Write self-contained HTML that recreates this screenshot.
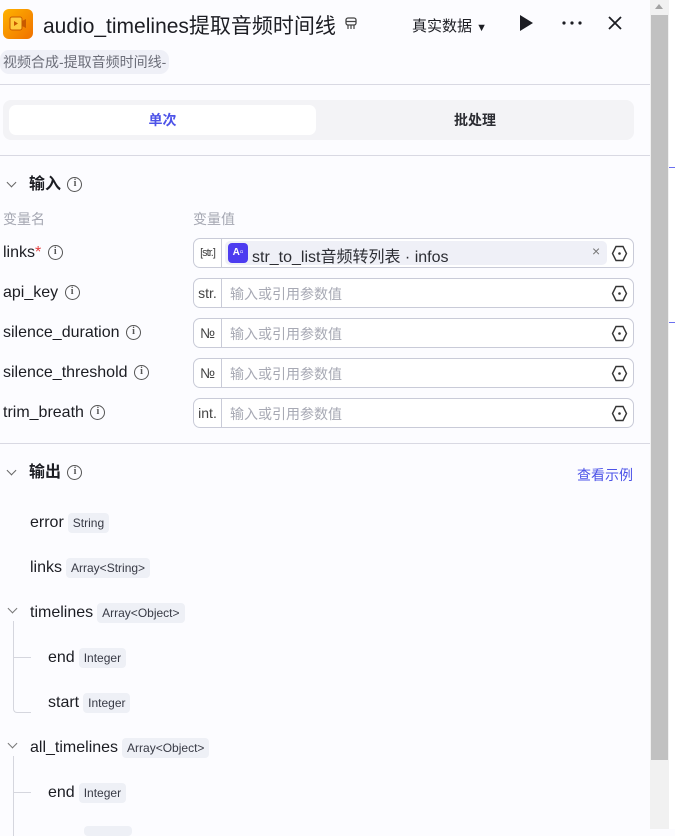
<!DOCTYPE html>
<html><head><meta charset="utf-8"><style>
*{box-sizing:border-box;margin:0;padding:0}
body{width:675px;height:829px;overflow:hidden;background:#fcfcff;font-family:"Liberation Sans","Noto Sans CJK SC",sans-serif;color:#1c1d23;position:relative}
.a{position:absolute;white-space:nowrap}
.hr{position:absolute;left:0;width:650px;height:1px;background:#d9d9e3}
.info{display:inline-block;width:15px;height:15px;border:1.3px solid #555;border-radius:50%;font-size:10px;line-height:12px;text-align:center;color:#555;vertical-align:middle;font-family:"Liberation Serif",serif;font-weight:bold;margin-left:2px}
.lbl{font-size:16px;left:3px;line-height:18px}
.box{position:absolute;left:193px;width:441px;height:30px;border:1px solid #c9cbd8;border-radius:7px;background:#fff}
.pre{position:absolute;left:0;top:0;width:28px;height:28px;border-right:1px solid #c9cbd8;font-size:14px;color:#444;text-align:center;line-height:28px}
.ph{position:absolute;left:36px;top:5px;font-size:14px;color:#a7a9b4}
.hex{position:absolute;right:5px;top:6px}
.tag{display:inline-block;background:#eef0f6;color:#383a45;font-size:12px;padding:1px 5px;border-radius:4px;margin-left:4px;vertical-align:middle;line-height:18px}
.out{font-size:16px;line-height:18px}
.chev{position:absolute;width:7px;height:7px;border-right:1.5px solid #666;border-bottom:1.5px solid #666;transform:rotate(45deg)}
</style></head><body>
<!-- header -->
<div class="a" style="left:3px;top:9px;width:30px;height:30px;border-radius:6px;background:linear-gradient(135deg,#ffb300,#f07000)"></div>
<svg class="a" style="left:9px;top:16px" width="18" height="16"><rect x="1" y="1" width="12" height="13" rx="2" fill="#ffcb3d" stroke="#c85a00"/><path d="M13 5 L17 3 L17 12 L13 10Z" fill="#c85a00"/><path d="M5 5 L9 7.5 L5 10Z" fill="#c85a00"/></svg>
<div class="a" style="left:43px;top:10px;font-size:21px;color:#1c1d23">audio_timelines提取音频时间线</div>
<svg class="a" style="left:345px;top:17px" width="12" height="13"><rect x="1" y="1" width="10" height="7" rx="2" fill="none" stroke="#444" stroke-width="1.3"/><path d="M3 8 V12 M6 8 V12 M9 8 V12 M1 4.5 H11" stroke="#444" stroke-width="1.2"/></svg>
<div class="a" style="left:412px;top:15px;font-size:15px;color:#1c1d23">真实数据 <span style="font-size:11px">▼</span></div>
<svg class="a" style="left:518px;top:14px" width="16" height="18"><path d="M2 1 L15 9 L2 17Z" fill="#1c1d23"/></svg>
<svg class="a" style="left:561px;top:20px" width="22" height="6"><circle cx="3" cy="3" r="1.6" fill="#1c1d23"/><circle cx="11" cy="3" r="1.6" fill="#1c1d23"/><circle cx="19" cy="3" r="1.6" fill="#1c1d23"/></svg>
<svg class="a" style="left:607px;top:15px" width="16" height="16"><path d="M2 2 L14 14 M14 2 L2 14" stroke="#1c1d23" stroke-width="1.8"/></svg>
<div class="a" style="left:0;top:50px;height:24px;padding:0 3px;background:#eff0f7;border-radius:9px;font-size:14px;line-height:24px;color:#6c6e79">视频合成-提取音频时间线-</div>
<div class="hr" style="top:84px"></div>
<!-- tabs -->
<div class="a" style="left:3px;top:100px;width:631px;height:40px;background:#f3f3f6;border-radius:8px"></div>
<div class="a" style="left:9px;top:105px;width:307px;height:30px;background:#fff;border-radius:7px;text-align:center;line-height:30px;font-size:14px;font-weight:bold;color:#4d53e8">单次</div>
<div class="a" style="left:320px;top:105px;width:310px;height:30px;text-align:center;line-height:30px;font-size:14px;font-weight:bold;color:#2c2d33">批处理</div>
<div class="hr" style="top:155px"></div>
<!-- input -->
<div class="chev" style="left:8px;top:179px"></div>
<div class="a" style="left:29px;top:175px;font-size:16px;font-weight:bold;line-height:20px">输入 <span class="info">i</span></div>
<div class="a" style="left:3px;top:209px;font-size:14px;color:#a5a7b2">变量名</div>
<div class="a" style="left:193px;top:209px;font-size:14px;color:#a5a7b2">变量值</div>

<div class="a lbl" style="top:244px">links<span style="color:#e53e3e">*</span> <span class="info">i</span></div>
<div class="box" style="top:238px"><div class="pre" style="font-size:11px;letter-spacing:-1px">[str.]</div>
<div class="a" style="left:31px;top:2px;width:382px;height:24px;background:#eff0f7;border-radius:5px"></div>
<div class="a" style="left:34px;top:4px;width:20px;height:20px;background:#4d3cf0;border-radius:4px;color:#fff;font-size:10px;font-weight:bold;text-align:center;line-height:20px">A▫</div>
<div class="a" style="left:58px;top:4px;font-size:16px;color:#2c2d33">str_to_list音频转列表 · infos</div>
<div class="a" style="left:398px;top:4px;font-size:14px;color:#777">×</div>
<svg class="hex" width="17" height="17"><path d="M5 1.5 H12 L15.5 8.5 L12 15.5 H5 L1.5 8.5Z" fill="none" stroke="#333" stroke-width="1.4"/><circle cx="8.5" cy="8.5" r="1.3" fill="#333"/></svg></div>

<div class="a lbl" style="top:284px">api_key <span class="info">i</span></div>
<div class="box" style="top:278px"><div class="pre">str.</div><div class="ph">输入或引用参数值</div><svg class="hex" width="17" height="17"><path d="M5 1.5 H12 L15.5 8.5 L12 15.5 H5 L1.5 8.5Z" fill="none" stroke="#333" stroke-width="1.4"/><circle cx="8.5" cy="8.5" r="1.3" fill="#333"/></svg></div>
<div class="a lbl" style="top:324px">silence_duration <span class="info">i</span></div>
<div class="box" style="top:318px"><div class="pre">№</div><div class="ph">输入或引用参数值</div><svg class="hex" width="17" height="17"><path d="M5 1.5 H12 L15.5 8.5 L12 15.5 H5 L1.5 8.5Z" fill="none" stroke="#333" stroke-width="1.4"/><circle cx="8.5" cy="8.5" r="1.3" fill="#333"/></svg></div>
<div class="a lbl" style="top:364px">silence_threshold <span class="info">i</span></div>
<div class="box" style="top:358px"><div class="pre">№</div><div class="ph">输入或引用参数值</div><svg class="hex" width="17" height="17"><path d="M5 1.5 H12 L15.5 8.5 L12 15.5 H5 L1.5 8.5Z" fill="none" stroke="#333" stroke-width="1.4"/><circle cx="8.5" cy="8.5" r="1.3" fill="#333"/></svg></div>
<div class="a lbl" style="top:404px">trim_breath <span class="info">i</span></div>
<div class="box" style="top:398px"><div class="pre">int.</div><div class="ph">输入或引用参数值</div><svg class="hex" width="17" height="17"><path d="M5 1.5 H12 L15.5 8.5 L12 15.5 H5 L1.5 8.5Z" fill="none" stroke="#333" stroke-width="1.4"/><circle cx="8.5" cy="8.5" r="1.3" fill="#333"/></svg></div>
<div class="hr" style="top:443px"></div>
<!-- output -->
<div class="chev" style="left:8px;top:467px"></div>
<div class="a" style="left:29px;top:463px;font-size:16px;font-weight:bold;line-height:20px">输出 <span class="info">i</span></div>
<div class="a" style="left:577px;top:465px;font-size:14px;color:#4d53e8">查看示例</div>
<div class="a out" style="left:30px;top:513px">error<span class="tag">String</span></div>
<div class="a out" style="left:30px;top:558px">links<span class="tag">Array&lt;String&gt;</span></div>
<div class="chev" style="left:9px;top:605px;border-color:#777"></div>
<div class="a out" style="left:30px;top:603px">timelines<span class="tag">Array&lt;Object&gt;</span></div>
<div class="a" style="left:13px;top:621px;width:18px;height:92px;border-left:1px solid #d5d6de;border-bottom:1px solid #d5d6de;border-bottom-left-radius:4px"></div>
<div class="a" style="left:14px;top:657px;width:17px;height:1px;background:#d5d6de"></div>
<div class="a out" style="left:48px;top:648px">end<span class="tag">Integer</span></div>
<div class="a out" style="left:48px;top:693px">start<span class="tag">Integer</span></div>
<div class="chev" style="left:9px;top:740px;border-color:#777"></div>
<div class="a out" style="left:30px;top:738px">all_timelines<span class="tag">Array&lt;Object&gt;</span></div>
<div class="a" style="left:13px;top:756px;width:1px;height:80px;background:#d5d6de"></div>
<div class="a" style="left:14px;top:792px;width:17px;height:1px;background:#d5d6de"></div>
<div class="a out" style="left:48px;top:783px">end<span class="tag">Integer</span></div>
<div class="a" style="left:84px;top:826px;width:48px;height:10px;background:#eef0f6;border-radius:4px"></div>
<!-- scrollbar & canvas -->
<div class="a" style="left:650px;top:0;width:19px;height:829px;background:#f1f1f1"></div>
<div class="a" style="left:651px;top:15px;width:17px;height:745px;background:#c1c1c1"></div>
<div class="a" style="left:655px;top:4px;width:0;height:0;border-left:4px solid transparent;border-right:4px solid transparent;border-bottom:5px solid #a3a3a3"></div>
<div class="a" style="left:669px;top:0;width:6px;height:829px;background:#fff"></div>
<div class="a" style="left:669px;top:167px;width:6px;height:1px;background:#6b70f0"></div>
<div class="a" style="left:669px;top:322px;width:6px;height:1px;background:#6b70f0"></div>
</body></html>
